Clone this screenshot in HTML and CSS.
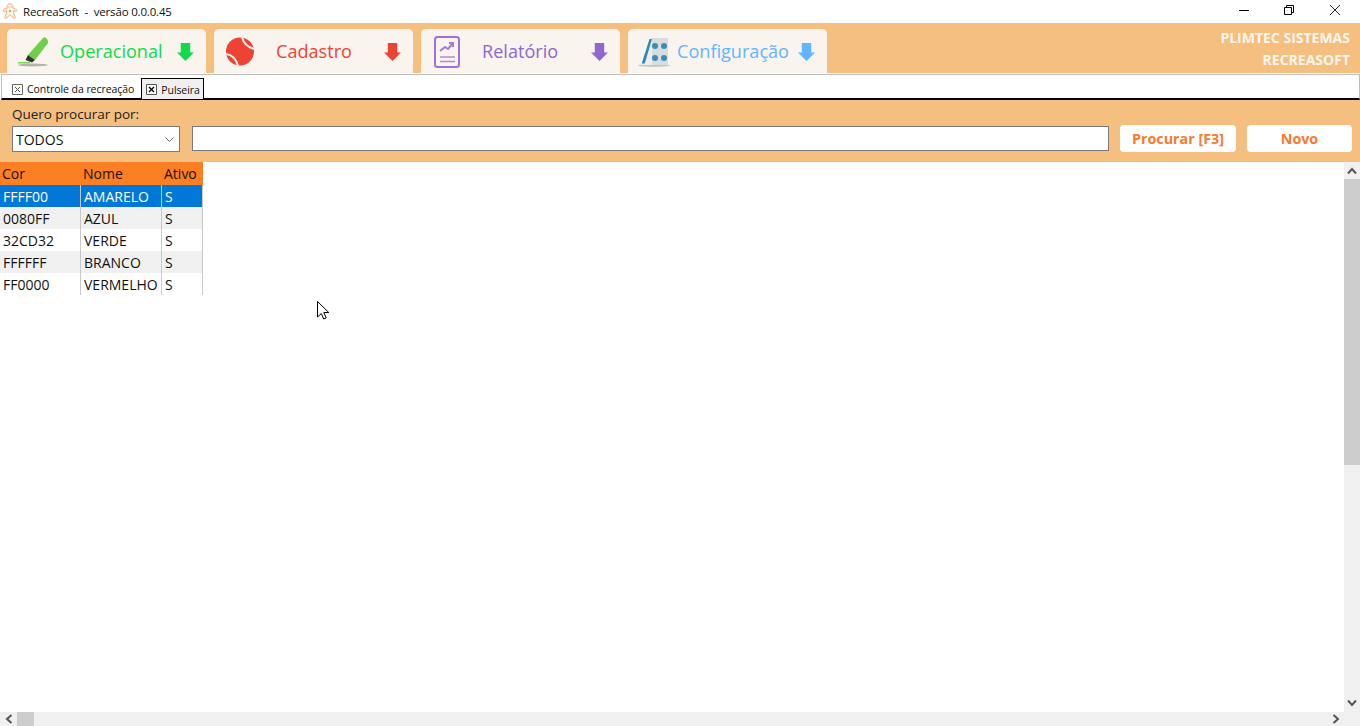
FILE: index.html
```html
<!DOCTYPE html>
<html lang="pt">
<head>
<meta charset="utf-8">
<title>RecreaSoft</title>
<link rel="stylesheet" href="styles.css">
</head>
<body>
<header class="titlebar">
  <svg class="app-icon" viewBox="0 0 16 17"><path d="M8 .800a3.200 3.200 0 0 1 3 4.300l3.300 1.300c1.300.6.700 2.400-.7 2l-2.300-.7.400 2.800 1.500 3.700c.5 1.300-1.200 2-1.800.8L8.500 12h-1l-2.900 3c-.6 1.200-2.300.5-1.800-.8l1.500-3.700.4-2.800-2.300.7c-1.400.4-2-1.400-.7-2L5 5.100a3.200 3.200 0 0 1 3-4.300z" fill="#fdf1e2" stroke="#f2b272" stroke-width="1"/><circle cx="8" cy="8" r="1" fill="#58b868"/><circle cx="6.800" cy="4" r=".6" fill="#e88"/><circle cx="9.200" cy="4" r=".6" fill="#e88"/></svg>
  <span class="app-title">RecreaSoft&nbsp; -&nbsp; versão 0.0.0.45</span>
  <div class="win-controls">
    <svg class="win-btn" viewBox="0 0 46 23"><path d="M19 10.500h10" stroke="#000" fill="none"/></svg>
    <svg class="win-btn" viewBox="0 0 46 23"><path d="M18.500 7.500h7v7h-7zM20.500 7.500v-2h7v7h-2" stroke="#000" fill="none"/></svg>
    <svg class="win-btn" viewBox="0 0 46 23"><path d="M18 5l10 10M28 5L18 15" stroke="#222" fill="none"/></svg>
  </div>
</header>

<nav class="menubar">
  <div class="menu-tab tab-green">
    <svg class="menu-icon" viewBox="0 0 36 36">
      <ellipse cx="18" cy="32" rx="15" ry="1.500" fill="#b4b4ac"/>
      <path d="M13 22L28 5q2-2 4 1l1 2q.5 1 0 2L20 27z" fill="#6fce4a"/>
      <path d="M13 22l7 5-3 2.500-6.500-2.500z" fill="#2b3a2b"/>
      <path d="M3 29h12v1.500H3z" fill="#76d850"/>
    </svg>
    <span class="menu-label">Operacional</span>
    <svg class="arrow" viewBox="0 0 18 19"><path d="M4 0h10v10h4l-9 9-9-9h4z"/></svg>
  </div>
  <div class="menu-tab tab-red">
    <svg class="menu-icon" viewBox="0 0 36 36">
      <circle cx="18" cy="18.500" r="14" fill="#ee4333"/>
      <path d="M20 4q2 9 12 12M4 21q9 1 12 12" stroke="#fbf1e8" stroke-width="2" fill="none"/>
    </svg>
    <span class="menu-label">Cadastro</span>
    <svg class="arrow" viewBox="0 0 18 19"><path d="M4 0h10v10h4l-9 9-9-9h4z"/></svg>
  </div>
  <div class="menu-tab tab-purple">
    <svg class="menu-icon" viewBox="0 0 36 36">
      <rect x="6" y="4" width="24" height="30" rx="2.500" fill="none" stroke="#a070d8" stroke-width="2"/>
      <path d="M11 18l5-4 3 2 5-6M20 10h4v4" fill="none" stroke="#a878dc" stroke-width="2"/>
      <path d="M11 24h15M11 28.500h15" stroke="#b088e0" stroke-width="1.500"/>
    </svg>
    <span class="menu-label">Relatório</span>
    <svg class="arrow" viewBox="0 0 18 19"><path d="M4 0h10v10h4l-9 9-9-9h4z"/></svg>
  </div>
  <div class="menu-tab tab-blue">
    <svg class="menu-icon" viewBox="0 0 36 36">
      <ellipse cx="18" cy="32.500" rx="16" ry="1.500" fill="#c8c8c0"/>
      <path d="M14 5h18v27H6z" fill="#eceeee"/>
      <path d="M16 5h16v27H16z" fill="#d8dcdc"/>
      <path d="M5.700 30.500L13.500 6h2.500L8.800 30.500z" fill="#3288b4"/>
      <circle cx="19" cy="13" r="3" fill="#3d8cb8"/><circle cx="28" cy="13" r="3" fill="#3d8cb8"/>
      <circle cx="19" cy="25" r="3" fill="#3d8cb8"/><circle cx="28" cy="25" r="3" fill="#3d8cb8"/>
    </svg>
    <span class="menu-label">Configuração</span>
    <svg class="arrow" viewBox="0 0 18 19"><path d="M4 0h10v10h4l-9 9-9-9h4z"/></svg>
  </div>
  <div class="brand">
    <span>PLIMTEC SISTEMAS</span>
    <span>RECREASOFT</span>
  </div>
</nav>

<div class="pagetabs">
  <div class="pagetab">
    <svg class="close-box" viewBox="0 0 11 11"><path d="M.5.500h10v10H.500z" fill="#fff" stroke="#666"/><path d="M3 3l5 5M8 3L3 8" stroke="#555"/></svg>
    <span>Controle da recreação</span>
  </div>
  <div class="pagetab active">
    <svg class="close-box" viewBox="0 0 11 11"><path d="M.5.500h10v10H.500z" fill="#fff" stroke="#555"/><path d="M3 3l5 5M8 3L3 8" stroke="#000" stroke-width="1.300"/></svg>
    <span>Pulseira</span>
  </div>
</div>

<section class="searchbar">
  <div class="search-label">Quero procurar por:</div>
  <div class="search-row">
    <div class="select">
      <span>TODOS</span>
      <svg class="chevron" viewBox="0 0 9 5"><path d="M.5.500l4 4 4-4" fill="none" stroke="#666"/></svg>
    </div>
    <div class="text-input"></div>
    <div class="button btn-search">Procurar [F3]</div>
    <div class="button btn-new">Novo</div>
  </div>
</section>

<main class="content">
  <div class="viewport">
    <div class="grid">
      <div class="row head"><div class="cell c1">Cor</div><div class="cell c2">Nome</div><div class="cell c3">Ativo</div></div>
      <div class="row selected"><div class="cell c1">FFFF00</div><div class="cell c2">AMARELO</div><div class="cell c3">S</div></div>
      <div class="row alt"><div class="cell c1">0080FF</div><div class="cell c2">AZUL</div><div class="cell c3">S</div></div>
      <div class="row"><div class="cell c1">32CD32</div><div class="cell c2">VERDE</div><div class="cell c3">S</div></div>
      <div class="row alt"><div class="cell c1">FFFFFF</div><div class="cell c2">BRANCO</div><div class="cell c3">S</div></div>
      <div class="row"><div class="cell c1">FF0000</div><div class="cell c2">VERMELHO</div><div class="cell c3">S</div></div>
    </div>
    <div class="hscroll">
      <div class="sb-btn-h"><svg class="sb-arrow" viewBox="0 0 8 10"><path d="M6.500 1L2 5l4.500 4" fill="none" stroke="#555" stroke-width="2"/></svg></div>
      <div class="hthumb"></div>
      <div class="sb-fill"></div>
      <div class="sb-btn-h"><svg class="sb-arrow" viewBox="0 0 8 10"><path d="M1.500 1L6 5 1.500 9" fill="none" stroke="#555" stroke-width="2"/></svg></div>
    </div>
  </div>
  <div class="vscroll">
    <div class="sb-btn-v"><svg class="sb-arrow-v" viewBox="0 0 10 8"><path d="M1 6.500L5 2l4 4.500" fill="none" stroke="#555" stroke-width="2"/></svg></div>
    <div class="vthumb"></div>
    <div class="sb-fill"></div>
    <div class="sb-btn-v end"><svg class="sb-arrow-v" viewBox="0 0 10 8"><path d="M1 1.500L5 6l4-4.500" fill="none" stroke="#555" stroke-width="2"/></svg></div>
  </div>
</main>

<svg class="cursor" viewBox="0 0 13 20"><path d="M.5.500v15.500l3.800-3.500 2.400 5.500 2.500-1.100-2.400-5.400h5z" fill="#fff" stroke="#000" stroke-width="1"/></svg>
</body>
</html>
```
FILE: styles.css
```css
* { box-sizing: border-box; }
html, body { margin: 0; height: 726px; overflow: hidden; }
body {
  font-family: "Open Sans", "Noto Sans", sans-serif;
  background: #fff;
  color: #000;
  display: flex;
  flex-direction: column;
}

/* title bar */
.titlebar { height: 23px; flex: none; display: flex; align-items: center; background: #fff; padding-left: 2px; }
.app-icon { width: 16px; height: 17px; flex: none; }
.app-title { margin-left: 5px; font-size: 11.500px; letter-spacing: -.18px; color: #111; }
.win-controls { margin-left: auto; margin-right: 2px; display: flex; }
.win-btn { width: 46px; height: 23px; display: block; }

/* main menu */
.menubar { height: 50px; flex: none; background: #f5bf80; display: flex; align-items: flex-end; padding-left: 7px; gap: 8px; }
.menu-tab {
  width: 199px; height: 44px; background: #f9f4ee;
  border-radius: 5px 5px 0 0;
  display: flex; align-items: center;
  padding-left: 8px; padding-right: 12px;
}
.menu-icon { width: 36px; height: 36px; flex: none; }
.menu-label { font-size: 18.100px; white-space: nowrap; }
.arrow { width: 17px; height: 18px; flex: none; fill: currentColor; margin-left: auto; margin-top: 2px; }
.tab-green { color: #0edc48; }
.tab-red { color: #ee4333; }
.tab-purple { color: #8e67d0; }
.tab-blue { color: #62b6ff; }
.tab-green .menu-label { margin-left: 9px; }
.tab-red .menu-label { margin-left: 18px; }
.tab-purple .menu-label { margin-left: 17px; }
.tab-blue .menu-label { margin-left: 5px; }
.brand {
  margin-left: auto; align-self: stretch;
  padding: 4px 10px 0 0;
  display: flex; flex-direction: column; align-items: flex-end;
  color: #fdf6ee; font-size: 14px; font-weight: 700; line-height: 22px;
}

/* page tabs */
.pagetabs {
  height: 26px; flex: none; background: #fff;
  margin: 1px 0 0 1px;
  border-top: 1px solid #bdbdbd;
  border-left: 1px solid #bdbdbd;
  border-right: 1px solid #bdbdbd;
  border-bottom: 2px solid #000;
  display: flex; align-items: flex-end;
  padding-left: 1px;
}
.pagetab {
  height: 20px; display: flex; align-items: center; gap: 4px;
  padding: 1px 6px 0 8px;
  font-size: 10.500px; letter-spacing: -.05px; color: #111;
  border: 1px solid transparent; border-bottom: 0;
}
.pagetab.active { background: #f0f0f0; border-color: #000; padding: 1px 3px 0 4px; margin-bottom: -1px; height: 21px; letter-spacing: -.1px; }
.close-box { width: 11px; height: 11px; flex: none; }

/* search */
.searchbar { height: 62px; flex: none; background: #f5bf80; padding: 5px 8px 0 12px; }
.search-label { font-size: 13.500px; line-height: 19px; color: #222; letter-spacing: -.03px; }
.search-row { display: flex; margin-top: 2px; align-items: flex-start; }
.select {
  width: 168px; height: 26px; background: #fff; border: 1px solid #7a7a7a;
  display: flex; align-items: center; justify-content: space-between;
  padding: 1px 5px 0 3px; font-size: 14px; color: #111;
}
.chevron { width: 9px; height: 5px; }
.text-input { width: 917px; height: 25px; margin-left: 12px; background: #fff; border: 1px solid #7a7a7a; }
.button {
  height: 27px; background: #fff; border-radius: 4px;
  color: #f97a2c; font-weight: 700; font-size: 14.300px;
  display: flex; align-items: center; justify-content: center;
  margin-top: -1px;
}
.btn-search { width: 116px; margin-left: 11px; }
.btn-new { width: 105px; margin-left: 11px; }

/* content */
.content { flex: 1; display: flex; min-height: 0; background: #fff; }
.viewport { flex: 1; display: flex; flex-direction: column; min-width: 0; }
.grid { flex: 1; }
.row { display: flex; height: 22px; width: 203px; font-size: 14px; color: #111; background: #fff; }
.cell { line-height: 24px; padding-left: 3px; overflow: hidden; white-space: nowrap; border-right: 1px solid #c8c8c8; }
.c1 { width: 81px; }
.c2 { width: 81px; }
.c3 { width: 41px; }
.head { height: 23px; background: #fd7f23; color: #1a1000; }
.head .cell { border-right: 0; padding-left: 2px; line-height: 24px; }
.selected { background: #0078d7; color: #fff; }
.alt { background: #f0f0f0; }

/* scrollbars */
.vscroll { width: 16px; flex: none; background: #f0f0f0; display: flex; flex-direction: column; }
.sb-btn-v { height: 17px; flex: none; display: flex; align-items: center; justify-content: center; }
.sb-btn-v.end { height: 15px; margin-bottom: 16px; }
.vthumb { height: 286px; flex: none; background: #cdcdcd; }
.sb-fill { flex: 1; background: #f0f0f0; }
.hscroll { height: 14px; flex: none; display: flex; background: #f0f0f0; }
.sb-btn-h { width: 17px; flex: none; display: flex; align-items: center; justify-content: center; }
.hthumb { width: 17px; flex: none; background: #cdcdcd; }
.sb-arrow { width: 8px; height: 10px; }
.sb-arrow-v { width: 10px; height: 8px; }

/* mouse pointer lying over the page */
.cursor { position: absolute; left: 317px; top: 301px; width: 13px; height: 20px; }
```
